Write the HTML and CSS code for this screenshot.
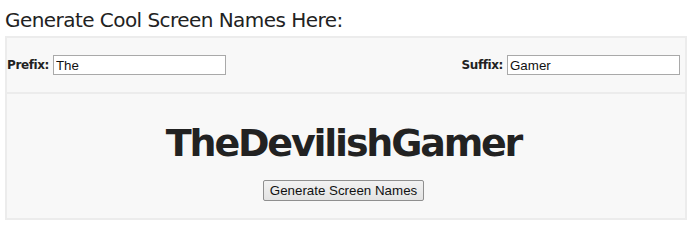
FILE: index.html
```html
<!DOCTYPE html>
<html>
<head>
<meta charset="utf-8">
<link rel="stylesheet" href="styles.css">
</head>
<body>
<div class="title">Generate Cool Screen Names Here:</div>
<div class="panel">
  <div class="inputs">
    <label class="field"><span class="lbl">Prefix:</span> <input class="txt" type="text" value="The"></label>
    <label class="field"><span class="lbl">Suffix:</span> <input class="txt" type="text" value="Gamer"></label>
  </div>
  <div class="result">
    <div class="name">TheDevilishGamer</div>
    <button class="btn" type="button">Generate Screen Names</button>
  </div>
</div>
</body>
</html>
```
FILE: styles.css
```css
html, body { background: #ffffff; }
body {
  margin: 5px;
  font-family: "DejaVu Sans", Verdana, sans-serif;
  color: #222222;
}
.title {
  font-size: 20px;
  line-height: 31px;
  letter-spacing: -0.55px;
  color: #222222;
}
.panel {
  border: 2px solid #ececec;
  background: #f8f8f8;
}
.inputs {
  display: flex;
  justify-content: space-between;
  align-items: center;
  height: 54px;
  padding: 0 5px 0 0;
  border-bottom: 2px solid #ececec;
}
.field { display: flex; align-items: center; gap: 4px; }
.lbl {
  font-size: 12px;
  font-weight: bold;
  letter-spacing: -0.4px;
  color: #222222;
}
.txt {
  box-sizing: border-box;
  width: 173px;
  height: 20px;
  margin: 0;
  padding: 1px 2px;
  border: 1px solid #a9a9a9;
  background: #fff;
  font-family: "Liberation Sans", Arial, sans-serif;
  font-size: 13.33px;
  color: #111;
}
.result {
  display: flex;
  flex-direction: column;
  align-items: center;
  height: 124px;
}
.name {
  margin-top: 27px;
  margin-left: -5px;
  font-size: 38px;
  line-height: 44px;
  font-weight: bold;
  letter-spacing: -2.2px;
  color: #222222;
}
.btn {
  margin-top: 15px;
  margin-left: -5px;
  height: 21px;
  padding: 0 6px;
  font-family: "Liberation Sans", Arial, sans-serif;
  font-size: 13.33px;
  color: #111;
  background: linear-gradient(#f2f2f2, #e3e3e3);
  border: 1px solid #8f8f8f;
  border-radius: 2px;
}
```
